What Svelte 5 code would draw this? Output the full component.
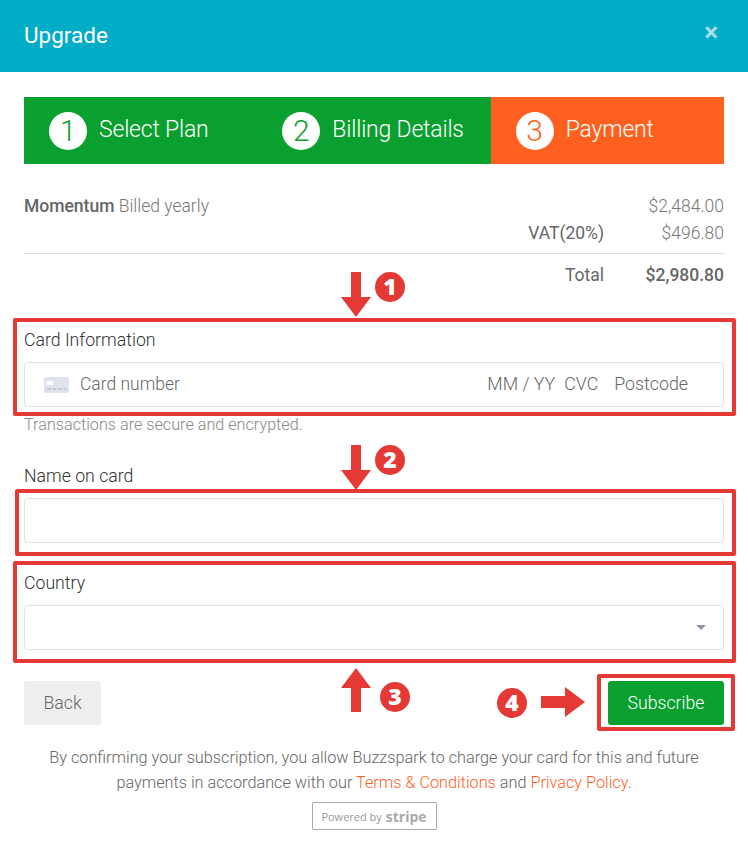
<script>
  const steps = [
    { n: 1, label: 'Select Plan', active: false },
    { n: 2, label: 'Billing Details', active: false },
    { n: 3, label: 'Payment', active: true }
  ];
</script>

<div class="page">
  <header class="head">
    <h1>Upgrade</h1>
    <span class="close">×</span>
  </header>

  <main class="body">
    <div class="steps">
      {#each steps as s}
        <div class="step" class:active={s.active}>
          <span class="num">{s.n}</span>
          <span class="lbl">{s.label}</span>
        </div>
      {/each}
    </div>

    <div class="summary">
      <div class="row r1"><span class="plan"><b>Momentum</b> Billed yearly</span><span class="amt">$2,484.00</span></div>
      <div class="row r2"><span class="key">VAT(20%)</span><span class="amt">$496.80</span></div>
      <div class="row total"><span class="key">Total</span><span class="amt">$2,980.80</span></div>
    </div>

    <div class="field f1">
      <div class="label">Card Information</div>
      <div class="input card">
        <svg class="cc" width="25" height="16" viewBox="0 0 25 16">
          <rect width="25" height="16" rx="1.5" fill="#dfe3ec" />
          <rect x="3" y="4" width="6" height="4" fill="#fff" />
          <path d="M3 12h4M8.500 12h4M14 12h4M19.500 12h3" stroke="#a9b0c0" stroke-width="1" />
        </svg>
        <span class="ph grow">Card number</span>
        <span class="ph mm">MM / YY</span>
        <span class="ph cvc">CVC</span>
        <span class="ph post">Postcode</span>
      </div>
      <div class="note">Transactions are secure and encrypted.</div>
    </div>

    <div class="field f2">
      <div class="label">Name on card</div>
      <div class="input"></div>
    </div>

    <div class="field f3">
      <div class="label">Country</div>
      <div class="input select"><span class="caret"></span></div>
    </div>

    <div class="actions">
      <button class="back">Back</button>
      <button class="sub">Subscribe</button>
    </div>

    <p class="legal">By confirming your subscription, you allow Buzzspark to charge your card for this and future<br />payments in accordance with our <span class="link">Terms &amp; Conditions</span> and <span class="link">Privacy Policy</span>.</p>

    <div class="pw"><span class="badge"><span class="by">Powered by</span> <b>stripe</b></span></div>
  </main>

  <div class="box b1"></div>
  <div class="box b2"></div>
  <div class="box b3"></div>
  <div class="box b4"></div>

  <svg class="marks" width="748" height="852" viewBox="0 0 748 852">
    <g fill="#e53935">
      <path d="M351 272h10v25h10l-15 20-15-20h10z" />
      <path d="M351 445h10v25h10l-15 20-15-20h10z" />
      <path d="M351 712h10v-24h10l-15-20-15 20h10z" />
      <path d="M541 696h24v-9l20 15-20 15v-9h-24z" />
      <circle cx="390" cy="287" r="15" />
      <circle cx="390" cy="460" r="15" />
      <circle cx="395" cy="697" r="15" />
      <circle cx="512" cy="703" r="15" />
    </g>
    <g class="marktxt" fill="#fff" text-anchor="middle">
      <text x="390" y="295">1</text>
      <text x="390" y="468">2</text>
      <text x="395" y="705">3</text>
      <text x="512" y="711">4</text>
    </g>
  </svg>
</div>

<style>
  :global(body) { margin: 0; background: #fff; }
  .page {
    position: relative;
    width: 748px;
    height: 852px;
    overflow: hidden;
    font-family: Roboto, "Liberation Sans", sans-serif;
    font-weight: 300;
    color: #555;
  }
  .head {
    height: 72px;
    background: #00acc6;
    display: flex;
    align-items: center;
    justify-content: space-between;
    padding: 0 24px;
    box-sizing: border-box;
  }
  h1 { margin: -2px 0 0; font-size: 22.500px; font-weight: 400; color: #fff; line-height: 70px; }
  .close { color: #a9dfe9; font-size: 26px; font-weight: 700; line-height: 1; margin: -9px 6px 0 0; }
  .body { padding: 25px 24px 0; }
  .steps { display: flex; height: 67px; }
  .step {
    flex: 1;
    background: #09a02f;
    display: flex;
    align-items: center;
    padding-left: 25px;
    gap: 12px;
    color: #fff;
  }
  .step.active { background: #ff5f1f; }
  .num {
    width: 38px; height: 38px; border-radius: 50%;
    background: #fff; color: #09a02f;
    display: flex; align-items: center; justify-content: center;
    font-size: 30px; font-weight: 300;
  }
  .active .num { color: #ff5f1f; }
  .lbl { font-size: 23px; letter-spacing: -0.2px; font-weight: 300; white-space: nowrap; margin-top: -3px; }
  .summary { padding-top: 30px; font-size: 17.500px; color: #777; }
  .row { display: flex; justify-content: flex-end; line-height: 24px; }
  .row.r1 { justify-content: space-between; height: 27px; }
  .row.r2 { height: 32px; border-bottom: 1px solid #ddd; }
  .row.total { padding-top: 9px; font-weight: 400; height: 24px; }
  .plan b { font-weight: 500; color: #666; }
  .key { font-weight: 400; color: #666; }
  .amt { width: 120px; text-align: right; }
  .total .amt { font-weight: 500; color: #666; }
  .label { font-size: 17.700px; font-weight: 300; color: #333; line-height: 24px; height: 34px; }
  .f1 { margin-top: 41px; }
  .f2 { margin-top: 29px; }
  .f3 { margin-top: 28px; }
  .input {
    height: 45px;
    box-sizing: border-box;
    border: 1px solid #e3e3e3;
    border-radius: 4px;
    background: #fff;
  }
  .card { display: flex; align-items: center; padding: 0 35px 0 19px; }
  .cc { margin-right: 11px; flex: none; }
  .ph { font-size: 17.800px; font-weight: 300; color: #666; white-space: nowrap; margin-top: -2px; }
  .grow { flex: 1; font-size: 17.500px; }
  .cvc { margin-left: 9px; }
  .post { margin-left: 16px; }
  .note { font-size: 16.200px; color: #888; line-height: 20px; margin-top: 8px; }
  .select { position: relative; }
  .caret {
    position: absolute; right: 17px; top: 19px;
    border-left: 5px solid transparent; border-right: 5px solid transparent;
    border-top: 5px solid #8d97a5;
  }
  .actions { display: flex; justify-content: space-between; margin-top: 31px; }
  button {
    height: 44px; border: 0; border-radius: 3px;
    font-family: inherit; font-size: 17.700px; font-weight: 300; padding: 0;
  }
  .back { width: 77px; background: #eee; color: #666; }
  .sub { width: 116px; background: #09a02f; color: #fff; }
  .legal {
    margin: 20px 0 0; text-align: center;
    font-size: 16.250px; line-height: 25px; color: #666;
  }
  .link { color: #ff5f1f; }
  .pw { display: flex; justify-content: center; margin-top: 7px; }
  .badge {
    width: 125px; height: 28px; box-sizing: border-box;
    border: 1px solid #aaa; border-radius: 2px;
    display: flex; align-items: center; justify-content: center; gap: 4px;
    font-size: 11px; color: #999; font-weight: 400;
    font-family: "Open Sans", sans-serif;
  }
  .badge b { font-size: 14px; font-weight: 700; color: #aaa; font-family: "Open Sans", sans-serif; }
  .box {
    position: absolute;
    box-sizing: border-box;
    border: 4px solid #e53935;
    border-radius: 2px;
    pointer-events: none;
  }
  .b1 { left: 13px; top: 318px; width: 723px; height: 98px; }
  .b2 { left: 15px; top: 489px; width: 721px; height: 67px; }
  .b3 { left: 13px; top: 561px; width: 723px; height: 102px; }
  .b4 { left: 597px; top: 674px; width: 138px; height: 57px; }
  .marks { position: absolute; left: 0; top: 0; pointer-events: none; }
  .marktxt { font-family: "Open Sans", sans-serif; font-size: 23px; font-weight: 800; }
</style>
